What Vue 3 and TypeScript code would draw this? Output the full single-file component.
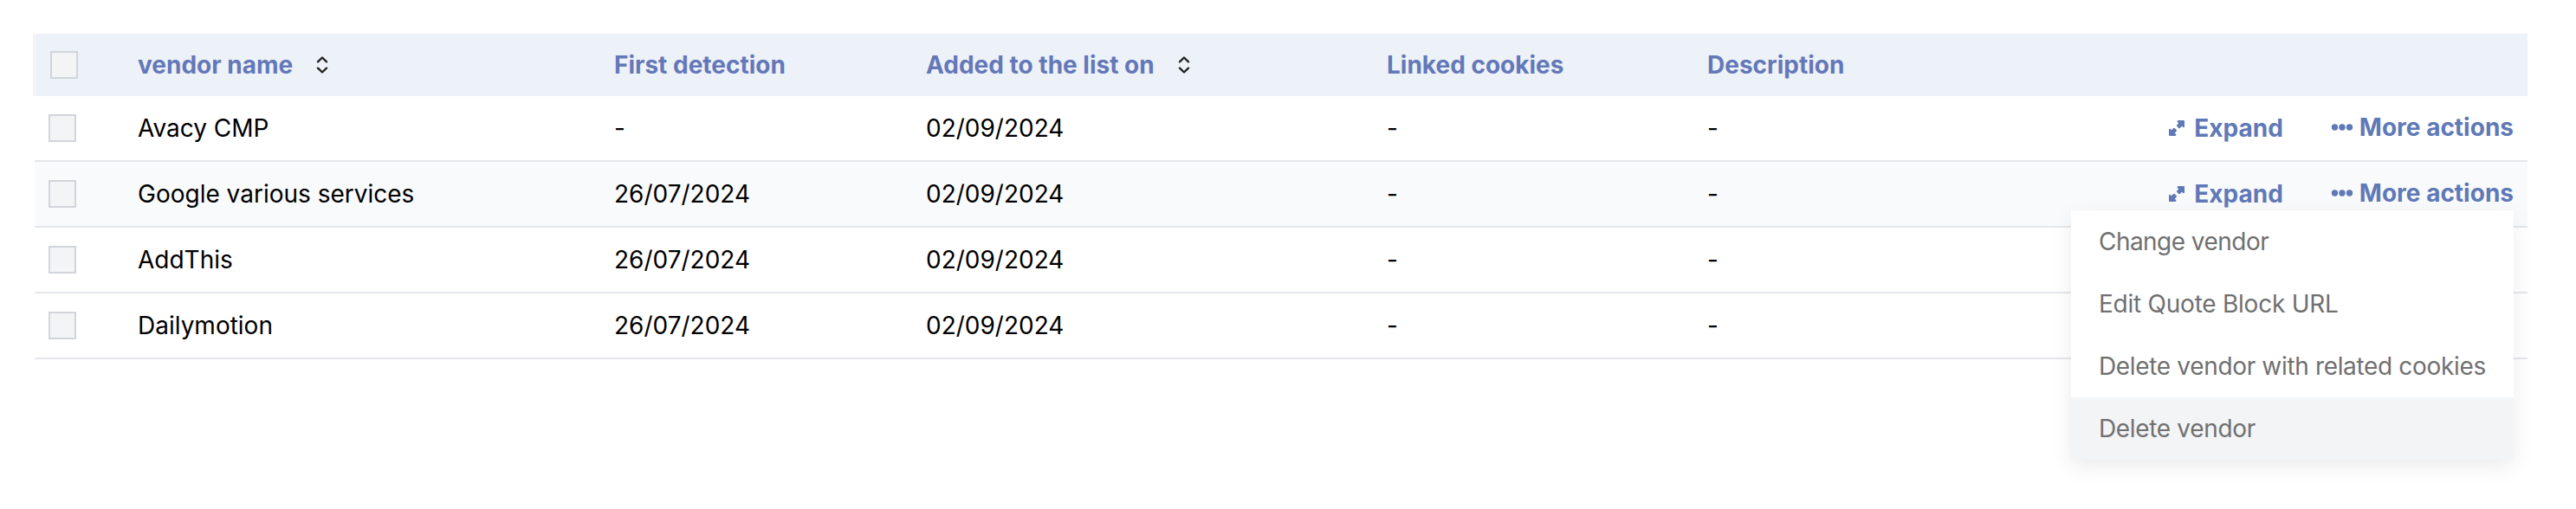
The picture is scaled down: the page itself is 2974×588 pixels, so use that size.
<script setup lang="ts">
interface Vendor {
  name: string
  detected: string
  added: string
}

const columns: { label: string; sortable?: boolean }[] = [
  { label: 'vendor name', sortable: true },
  { label: 'First detection' },
  { label: 'Added to the list on', sortable: true },
  { label: 'Linked cookies' },
  { label: 'Description' },
]

const vendors: Vendor[] = [
  { name: 'Avacy CMP', detected: '-', added: '02/09/2024' },
  { name: 'Google various services', detected: '26/07/2024', added: '02/09/2024' },
  { name: 'AddThis', detected: '26/07/2024', added: '02/09/2024' },
  { name: 'Dailymotion', detected: '26/07/2024', added: '02/09/2024' },
]

// The open menu covers the actions of the rows below it.
const openRow = 1
const menuItems = ['Change vendor', 'Edit Quote Block URL', 'Delete vendor with related cookies', 'Delete vendor']
const activeItem = 3
</script>

<template>
  <main class="page">
    <div class="header grid">
      <span class="check"></span>
      <div v-for="c in columns" :key="c.label" class="heading">
        <span>{{ c.label }}</span>
        <svg v-if="c.sortable" class="sort" width="14" height="20" viewBox="0 0 14 20">
          <path d="M2 6.3 7 1.5l5 4.8M2 13.7l5 4.8 5-4.8" />
        </svg>
      </div>
    </div>
    <div v-for="(v, i) in vendors" :key="v.name" class="row grid" :class="{ hovered: i === openRow }">
      <span class="check"></span>
      <span>{{ v.name }}</span>
      <span>{{ v.detected }}</span>
      <span>{{ v.added }}</span>
      <span>-</span>
      <span>-</span>
      <div v-if="i <= openRow" class="actions">
        <span class="action expand">
          <svg width="20" height="20" viewBox="0 0 20 20">
            <path
              class="fill"
              d="M12 1h6q1 0 1 1v6q0 1.600-1.300 1.300l-1.700-1.500-2.300 2.100q-.7.600-1.400 0L10.200 7.800q-.6-.7 0-1.400L12.200 4.300 10.900 3Q9.900 1.200 12 1z"
            />
            <path
              class="fill"
              d="M8 19H2q-1 0-1-1v-6q0-1.600 1.300-1.300l1.700 1.500 2.300-2.100q.7-.6 1.400 0l2.100 2.100q.6.700 0 1.400L7.800 15.700 9.100 17Q10.100 18.800 8 19z"
            />
          </svg>
          Expand
        </span>
        <span class="action more">
          <svg width="26" height="10" viewBox="0 0 26 10">
            <circle class="fill" cx="4.500" cy="5" r="3.700" />
            <circle class="fill" cx="13" cy="5" r="3.700" />
            <circle class="fill" cx="21.500" cy="5" r="3.700" />
          </svg>
          More actions
        </span>
      </div>
      <div v-if="i === openRow" class="menu">
        <div v-for="(m, k) in menuItems" :key="m" class="item" :class="{ active: k === activeItem }">{{ m }}</div>
      </div>
    </div>
  </main>
</template>

<style>
body {
  background: #fff;
}
</style>

<style scoped>
.page {
  box-sizing: border-box;
  width: 2974px;
  height: 588px;
  padding: 39px 56px 0 40px;
  font-family: Inter, "Liberation Sans", sans-serif;
  font-size: 28px;
  line-height: 40px;
  color: #000;
  white-space: nowrap;
}
.grid {
  display: grid;
  grid-template-columns: 103px 550px 360px 532px 370px 1fr auto;
  align-items: center;
  box-sizing: border-box;
  padding: 0 16px;
}
.header {
  height: 72px;
  margin-left: -2px;
  padding-left: 16px;
  border-left: 4px solid #f3f4f6;
  background: #edf2f9;
  color: #6478b8;
  font-weight: 700;
  grid-template-columns: 101px 550px 360px 532px 370px 1fr;
}
.heading {
  display: flex;
  align-items: center;
}
.sort {
  margin-left: 27px;
  fill: none;
  stroke: #222;
  stroke-width: 2.4;
  stroke-linecap: round;
  stroke-linejoin: round;
}
.row {
  position: relative;
  height: 76px;
  border-bottom: 2px solid #e5e7eb;
}
.hovered {
  background: #f9fafc;
}
.check {
  box-sizing: border-box;
  width: 32px;
  height: 32px;
  border: 2px solid #d1d5db;
  background: #f3f4f6;
}
.actions {
  display: flex;
  align-items: center;
  justify-content: flex-end;
  color: #5f79b7;
  font-weight: 700;
}
.action {
  display: flex;
  align-items: center;
}
.expand svg {
  margin-right: 10px;
}
.more {
  margin: 0 0 2px 55px;
}
.more svg {
  margin-right: 7px;
}
.fill {
  fill: #5f79b7;
}
.menu {
  position: absolute;
  z-index: 2;
  top: 56px;
  right: 16px;
  width: 511px;
  background: #fff;
  box-shadow: 0 8px 24px rgba(0, 0, 0, 0.08);
  color: #707070;
}
.item {
  padding: 16px 32px;
  letter-spacing: -0.34px;
}
.item:first-child {
  letter-spacing: -0.54px;
}
.item:nth-child(2) {
  letter-spacing: -0.24px;
}
.active {
  background: #f3f4f6;
}
</style>
